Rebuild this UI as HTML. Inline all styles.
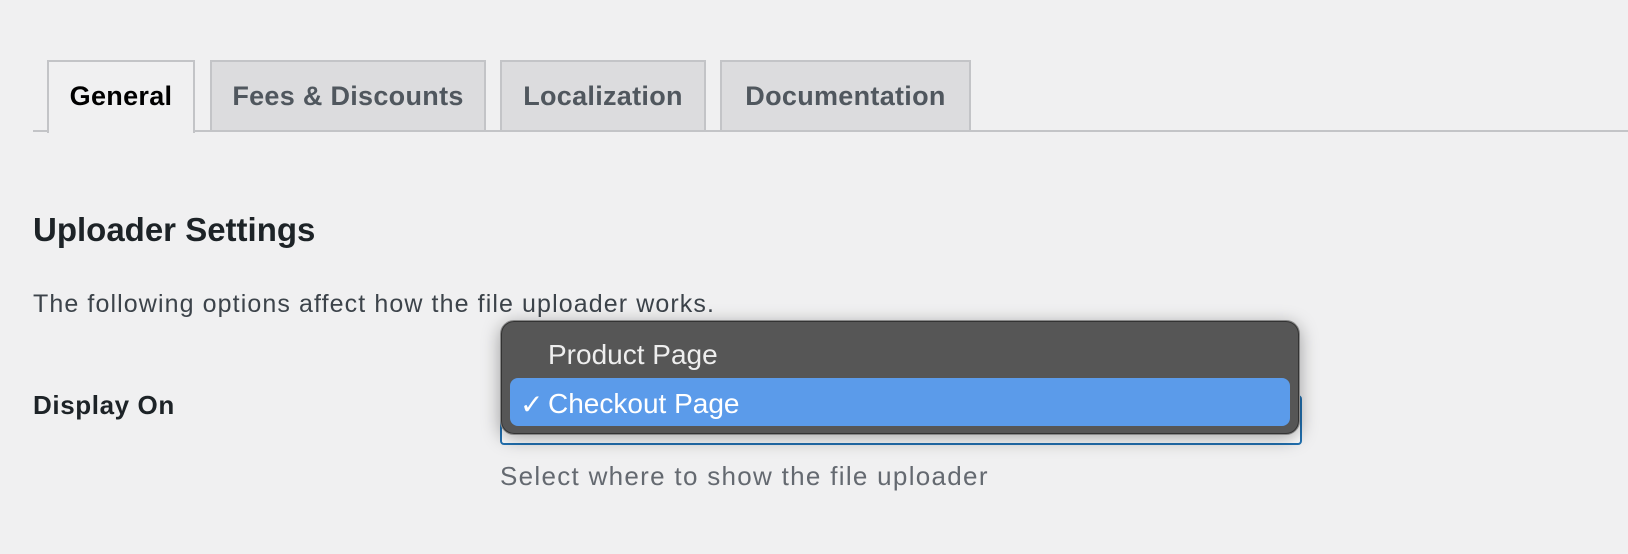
<!DOCTYPE html>
<html><head><style>
body{margin:0;width:1628px;height:554px;background:#f0f0f1;font-family:"Liberation Sans",sans-serif;position:relative;overflow:hidden;color:#1d2327}
.line{position:absolute;left:33px;right:0;top:130px;height:2px;background:#c3c4c7}
.tab{position:absolute;top:60px;height:70px;box-sizing:border-box;border:2px solid #c3c4c7;border-bottom:none;background:#dcdcde;color:#50575e;font-weight:bold;font-size:27px;letter-spacing:0.3px;line-height:68px;text-align:center}
.tab.a{background:#f0f0f1;color:#000;height:73px}
.t{position:absolute;white-space:nowrap}
</style></head><body>
<div class="line"></div>
<div class="tab a" style="left:47px;width:148px">General</div>
<div class="tab" style="left:210px;width:276px">Fees &amp; Discounts</div>
<div class="tab" style="left:500px;width:206px">Localization</div>
<div class="tab" style="left:720px;width:251px">Documentation</div>
<div class="t" style="left:33px;top:211px;font-size:33px;font-weight:bold">Uploader Settings</div>
<div class="t" style="left:33px;top:290px;font-size:25px;letter-spacing:1.1px;color:#3c434a">The following options affect how the file uploader works.</div>
<div class="t" style="left:33px;top:390px;font-size:26px;letter-spacing:0.6px;font-weight:bold">Display On</div>
<div style="position:absolute;left:500px;top:395px;width:802px;height:50px;box-sizing:border-box;border:2px solid #2271b1;border-radius:4px;background:#fff"></div>
<div class="t" style="left:500px;top:461px;font-size:26px;letter-spacing:1.3px;color:#646970">Select where to show the file uploader</div>
<div style="position:absolute;left:500px;top:320px;width:800px;height:115px;box-sizing:border-box;background:#565656;border:1.5px solid #8a8a8a;border-radius:14px;box-shadow:0 4px 18px rgba(0,0,0,.35),inset 0 0 0 1px #333"></div>
<div style="position:absolute;left:510px;top:378px;width:780px;height:48px;background:#5b9bea;border-radius:8px"></div>
<div class="t" style="left:548px;top:339px;font-size:28px;color:#eee">Product Page</div>
<div class="t" style="left:520px;top:388px;font-size:28px;color:#fff">✓</div>
<div class="t" style="left:548px;top:388px;font-size:28px;color:#fff">Checkout Page</div>
</body></html>
